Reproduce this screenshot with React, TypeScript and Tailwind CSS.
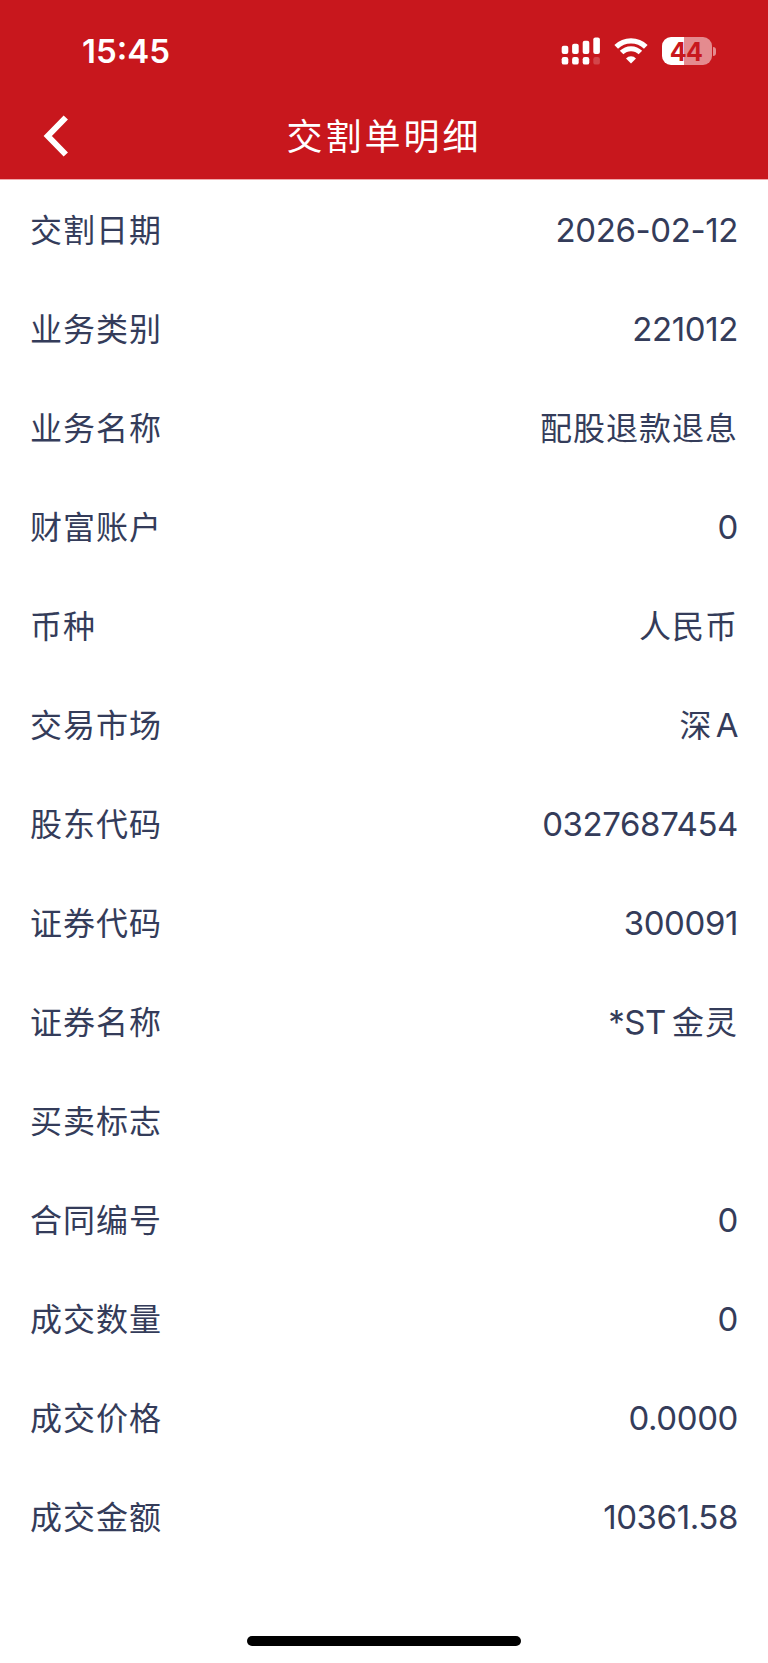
interface DetailRow {
    label: string;
    value: string;
}

const rows: DetailRow[] = [
    { label: '交割日期', value: '2026-02-12' },
    { label: '业务类别', value: '221012' },
    { label: '业务名称', value: '配股退款退息' },
    { label: '财富账户', value: '0' },
    { label: '币种', value: '人民币' },
    { label: '交易市场', value: '深A' },
    { label: '股东代码', value: '0327687454' },
    { label: '证券代码', value: '300091' },
    { label: '证券名称', value: '*ST金灵' },
    { label: '买卖标志', value: '' },
    { label: '合同编号', value: '0' },
    { label: '成交数量', value: '0' },
    { label: '成交价格', value: '0.0000' },
    { label: '成交金额', value: '10361.58' },
];

function SignalIcon() {
    return (
        <svg width="40" height="28" viewBox="0 0 40 28" fill="#fff">
            <rect x="0.7" y="8.7" width="6.6" height="8.4" rx="2" />
            <rect x="11.1" y="6.7" width="6.6" height="10.4" rx="2" />
            <rect x="21.7" y="3.7" width="6.6" height="13.4" rx="2" />
            <rect x="32.3" y="0.5" width="6.6" height="16.6" rx="2" />
            <rect x="0.7" y="20.1" width="6.6" height="7.5" rx="2.2" />
            <rect x="11.1" y="20.1" width="6.6" height="7.5" rx="2.2" />
            <rect x="21.7" y="20.1" width="6.6" height="7.5" rx="2.2" />
            <rect x="32.3" y="20.1" width="6.6" height="7.5" rx="2.2" opacity="0.2" />
        </svg>
    );
}

function WifiIcon() {
    return (
        <svg width="34" height="26" viewBox="0 0 34 26" fill="none" stroke="#fff">
            <path d="M2.2 8.8 A21.2 21.2 0 0 1 31.8 8.8" strokeWidth="5.2" />
            <path d="M7.6 14.6 A13.2 13.2 0 0 1 26.4 14.6" strokeWidth="5" />
            <path d="M17 25.6 L12 20.4 A7 7 0 0 1 22 20.4 Z" fill="#fff" stroke="none" />
        </svg>
    );
}

function Battery() {
    return (
        <div className="flex items-center gap-[1px]">
            <div className="flex h-7 w-[50px] items-center justify-center rounded-[9px] bg-[linear-gradient(to_right,#fff_22px,#e48b8f_22px)] pt-px pr-0.5 text-[25px] leading-7 font-bold tracking-[-0.6px] text-[#c8171d]">
                44
            </div>
            <div className="h-[9px] w-[3px] rounded-r-full bg-[#e48b8f]" />
        </div>
    );
}

// Latin runs are set slightly larger than the Chinese glyphs next to them
function Value({ text }: { text: string }) {
    const runs = text.match(/[\x20-\x7e]+|[^\x20-\x7e]+/g) ?? [];

    return (
        <div className="flex items-center">
            {runs.map((run, index) =>
                /[\x20-\x7e]/.test(run) ? (
                    <span key={index} className={`text-[33px] tracking-[-0.4px] ${index > 0 ? 'ml-[3px]' : ''}`}>
                        {run}
                    </span>
                ) : (
                    <span key={index} className={`text-[32px] tracking-[1px] ${index > 0 ? 'ml-1.5' : ''}`}>
                        {run}
                    </span>
                )
            )}
        </div>
    );
}

export default function App() {
    return (
        <div className="flex h-[1663px] w-[768px] flex-col bg-white font-['Inter','Noto_Sans_CJK_SC',sans-serif] text-[#343c5a]">
            <header className="flex h-[180px] flex-col border-b border-[#f0a9ab] bg-[#c8171d] text-white">
                <div className="flex h-[102px] items-center justify-between pr-[52px] pl-[82px]">
                    <span className="pt-px text-[33px] leading-none font-semibold">15:45</span>
                    <div className="flex items-center">
                        <SignalIcon />
                        <div className="ml-[13px]">
                            <WifiIcon />
                        </div>
                        <div className="ml-[14px]">
                            <Battery />
                        </div>
                    </div>
                </div>
                <div className="grid h-[68px] grid-cols-[1fr_auto_1fr] items-center">
                    <button className="ml-[42px] w-7" aria-label="返回">
                        <svg width="28" height="42" viewBox="0 0 28 42" fill="none" stroke="#fff" strokeWidth="6">
                            <path d="M23.8 2.5 L5.8 21 L23.8 39.5" />
                        </svg>
                    </button>
                    <h1 className="pt-px text-[36px] leading-none tracking-[3px]">交割单明细</h1>
                </div>
            </header>

            <main className="flex flex-1 flex-col pt-px">
                {rows.map((row) => (
                    <div key={row.label} className="flex h-[99px] items-center justify-between px-[30px]">
                        <span className="text-[32px] tracking-[1px]">{row.label}</span>
                        <Value text={row.value} />
                    </div>
                ))}
            </main>

            <div className="mb-[17px] h-[10px] w-[274px] self-center rounded-full bg-black" />
        </div>
    );
}
